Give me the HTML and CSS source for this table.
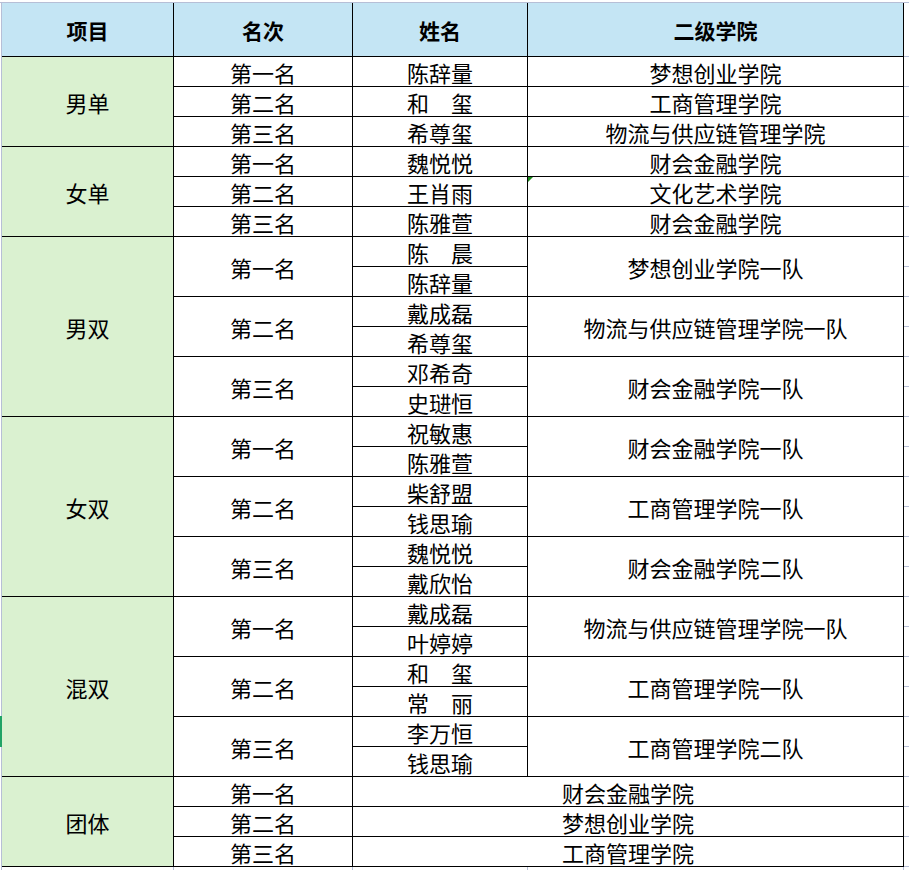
FILE: index.html
```html
<!DOCTYPE html>
<html lang="zh-CN">
<head>
<meta charset="utf-8">
<title>比赛成绩</title>
<link rel="stylesheet" href="styles.css">
</head>
<body>
<div class="sheet">
  <div class="grid">
    <div class="cell head">项目</div>
    <div class="cell head">名次</div>
    <div class="cell head">姓名</div>
    <div class="cell head">二级学院</div>

    <div class="cell group span3">男单</div>
    <div class="cell">第一名</div><div class="cell">陈辞量</div><div class="cell">梦想创业学院</div>
    <div class="cell">第二名</div><div class="cell">和　玺</div><div class="cell">工商管理学院</div>
    <div class="cell">第三名</div><div class="cell">希尊玺</div><div class="cell">物流与供应链管理学院</div>

    <div class="cell group span3">女单</div>
    <div class="cell">第一名</div><div class="cell">魏悦悦</div><div class="cell">财会金融学院</div>
    <div class="cell">第二名</div><div class="cell">王肖雨</div><div class="cell flag">文化艺术学院</div>
    <div class="cell">第三名</div><div class="cell">陈雅萱</div><div class="cell">财会金融学院</div>

    <div class="cell group span6">男双</div>
    <div class="cell span2">第一名</div><div class="cell">陈　晨</div><div class="cell span2">梦想创业学院一队</div>
    <div class="cell">陈辞量</div>
    <div class="cell span2">第二名</div><div class="cell">戴成磊</div><div class="cell span2">物流与供应链管理学院一队</div>
    <div class="cell">希尊玺</div>
    <div class="cell span2">第三名</div><div class="cell">邓希奇</div><div class="cell span2">财会金融学院一队</div>
    <div class="cell">史琎恒</div>

    <div class="cell group span6">女双</div>
    <div class="cell span2">第一名</div><div class="cell">祝敏惠</div><div class="cell span2">财会金融学院一队</div>
    <div class="cell">陈雅萱</div>
    <div class="cell span2">第二名</div><div class="cell">柴舒盟</div><div class="cell span2">工商管理学院一队</div>
    <div class="cell">钱思瑜</div>
    <div class="cell span2">第三名</div><div class="cell">魏悦悦</div><div class="cell span2">财会金融学院二队</div>
    <div class="cell">戴欣怡</div>

    <div class="cell group span6">混双</div>
    <div class="cell span2">第一名</div><div class="cell">戴成磊</div><div class="cell span2">物流与供应链管理学院一队</div>
    <div class="cell">叶婷婷</div>
    <div class="cell span2">第二名</div><div class="cell">和　玺</div><div class="cell span2">工商管理学院一队</div>
    <div class="cell">常　丽</div>
    <div class="cell span2">第三名</div><div class="cell">李万恒</div><div class="cell span2">工商管理学院二队</div>
    <div class="cell">钱思瑜</div>

    <div class="cell group span3">团体</div>
    <div class="cell">第一名</div><div class="cell wide">财会金融学院</div>
    <div class="cell">第二名</div><div class="cell wide">梦想创业学院</div>
    <div class="cell">第三名</div><div class="cell wide">工商管理学院</div>
  </div>
  <div class="edge">
    <div class="edge-head"></div>
    <div class="edge-body"></div>
  </div>
</div>
<div class="below">
  <div class="stub"></div><div class="stub"></div><div class="stub"></div><div class="stub"></div>
</div>
<div class="row-marker"></div>
</body>
</html>
```
FILE: styles.css
```css
html, body {
  margin: 0;
  padding: 0;
  background: #ffffff;
}

body {
  position: relative;
  width: 909px;
  height: 870px;
  overflow: hidden;
  font-family: "Noto Sans CJK SC", "Noto Sans", sans-serif;
  color: #000000;
}

.sheet {
  display: flex;
  margin-top: 2px;
  border-top: 1px solid #b7bfd6;
}

.grid {
  display: grid;
  grid-template-columns: 172px 179px 175px 376px;
  grid-template-rows: 54px repeat(27, 30px);
  margin-left: 1px;
  border-left: 1px solid #b7bfd6;
}

.cell {
  box-sizing: border-box;
  position: relative;
  display: flex;
  align-items: center;
  justify-content: center;
  padding-top: 0;
  border-right: 1px solid #000000;
  border-bottom: 1px solid #000000;
  font-size: 22px;
  line-height: 1;
  white-space: nowrap;
  background: #ffffff;
}

.head {
  background: #c4e5f4;
  font-weight: 700;
  font-size: 21px;
  padding-top: 1px;
}

.group {
  background: #daf1d0;
}

.span2 { grid-row: span 2; }
.span3 { grid-row: span 3; }
.span6 { grid-row: span 6; }
.wide { grid-column: span 2; }

.flag::before {
  content: "";
  position: absolute;
  top: 0;
  left: 0;
  width: 0;
  height: 0;
  border-top: 5px solid #1a8a1a;
  border-right: 5px solid transparent;
}

.edge {
  flex: 1;
  display: flex;
  flex-direction: column;
}

.edge-head {
  height: 53px;
  border-bottom: 1px solid #b7bfd6;
}

.edge-body {
  flex: 1;
  background-image: repeating-linear-gradient(to bottom, transparent 0 29px, #b7bfd6 29px 30px);
}

.below {
  display: grid;
  grid-template-columns: 172px 179px 175px 376px;
  height: 3px;
  margin-left: 1px;
  border-left: 1px solid #b7bfd6;
}

.stub {
  border-right: 1px solid #b7bfd6;
}

.row-marker {
  position: absolute;
  left: 0;
  top: 716px;
  width: 2px;
  height: 31px;
  background: #21a366;
}
```
